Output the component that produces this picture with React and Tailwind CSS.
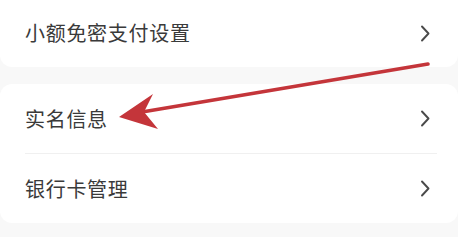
import React from "react";

function Chevron() {
  return (
    <svg width="11" height="17" viewBox="0 0 11 17" fill="none" className="shrink-0">
      <path d="M2 1.5 L8.5 8.5 L2 15.5" stroke="#4a4a4a" strokeWidth="1.9" strokeLinecap="round" strokeLinejoin="round" />
    </svg>
  );
}

function Row({ label }) {
  return (
    <div className="flex items-center justify-between h-[69px] pl-[25px] pr-[27px]">
      <span className="text-[20px] text-[#3a3a3a] leading-none tracking-[0.7px]" style={{ fontFamily: '"Noto Sans CJK SC", "Noto Sans", sans-serif' }}>
        {label}
      </span>
      <Chevron />
    </div>
  );
}

export default function App() {
  return (
    <div className="relative w-[458px] h-[237px] bg-[#f8f8f8] overflow-hidden">
      <div className="bg-white rounded-b-[12px] h-[68px] -mt-[1px] flex flex-col justify-center">
        <Row label="小额免密支付设置" />
      </div>
      <div className="mt-[17px] bg-white rounded-[12px] flex flex-col">
        <Row label="实名信息" />
        <div className="h-px bg-[#f0f0f0] ml-[25px] mr-[21px]" />
        <Row label="银行卡管理" />
      </div>
      <svg className="absolute left-0 top-0 pointer-events-none" width="458" height="237" viewBox="0 0 458 237">
        <line x1="428" y1="64" x2="142" y2="112" stroke="#c4353a" strokeWidth="3.6" strokeLinecap="round" />
        <polygon points="119,117 153,94 144,112 158,129" fill="#c4353a" />
      </svg>
    </div>
  );
}
